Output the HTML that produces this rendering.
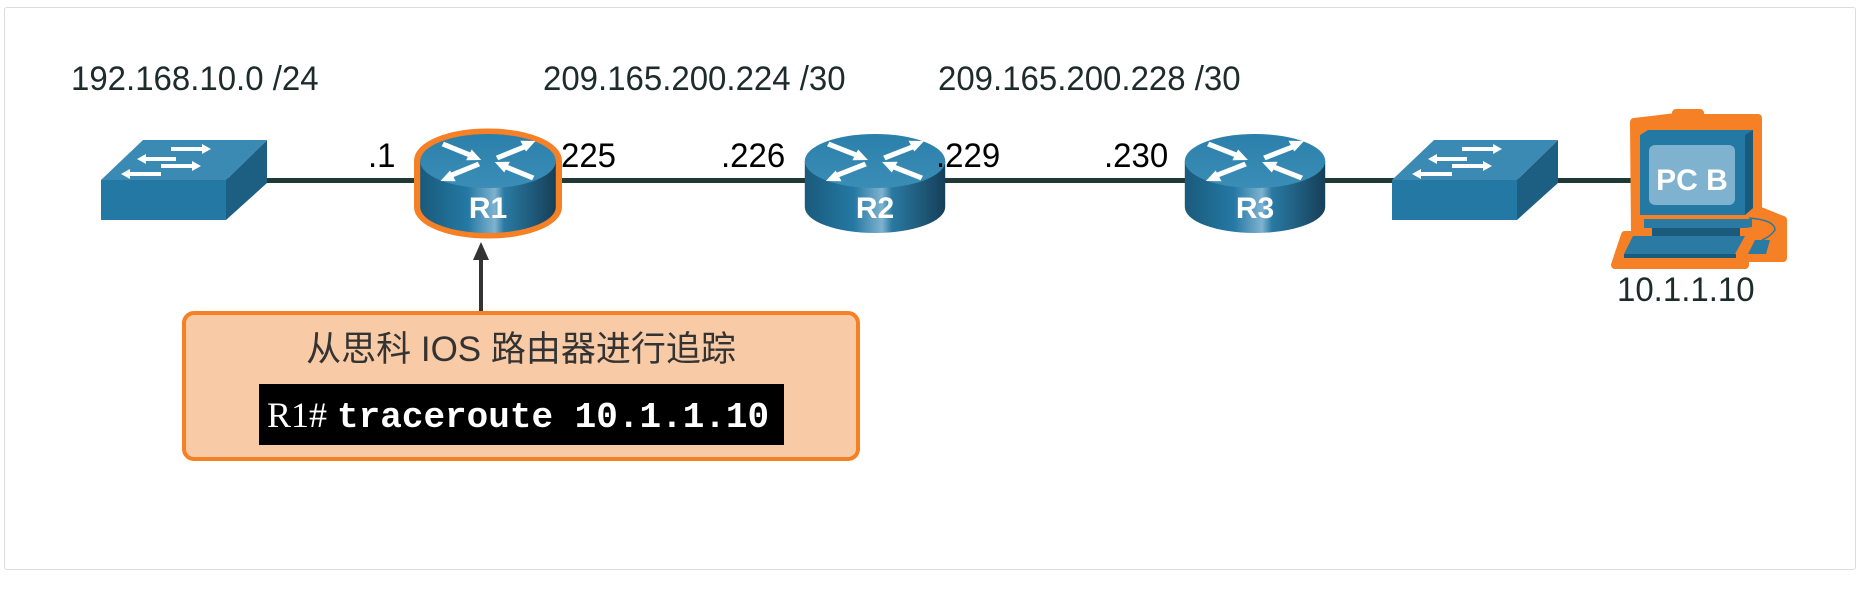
<!DOCTYPE html>
<html><head><meta charset="utf-8"><style>
body{margin:0;width:1862px;height:594px;background:#fff;overflow:hidden;position:relative;font-family:"Liberation Sans","Noto Sans CJK SC",sans-serif}
.card{position:absolute;left:4px;top:7px;width:1850px;height:561px;border:1px solid #dcdcdc;border-radius:3px}
.t{position:absolute;font-size:34px;color:#1d2b2b;white-space:nowrap;transform:scaleX(0.97);transform-origin:left;line-height:40px}
.box{position:absolute;left:182px;top:311px;width:670px;height:142px;background:#f9caa6;border:4px solid #f58025;border-radius:12px}
.title{position:absolute;left:0;width:100%;top:13px;text-align:center;font-size:35px;color:#333;line-height:44px}
.cmd{position:absolute;left:73px;top:69px;width:525px;height:61px;background:#000;color:#fff;font-size:36px;line-height:61px;white-space:nowrap;padding-left:8px;box-sizing:border-box}
</style></head><body>
<div class="card"></div>
<svg width="1862" height="594" style="position:absolute;left:0;top:0">
<defs>
<linearGradient id="body" x1="0" x2="1"><stop offset="0" stop-color="#1a5a7c"/><stop offset=".35" stop-color="#2479a4"/><stop offset=".55" stop-color="#7fb2cf"/><stop offset=".62" stop-color="#2a7aa3"/><stop offset="1" stop-color="#163f58"/></linearGradient>
<linearGradient id="top" x1="0" y1="0" x2="0" y2="1"><stop offset="0" stop-color="#2b80ab"/><stop offset="1" stop-color="#3a8db6"/></linearGradient>
<g id="rt">
<path d="M-60 0 V46 A60 26 0 0 0 60 46 V0 Z" fill="url(#body)"/>
<ellipse cx="0" cy="0" rx="60" ry="27" fill="url(#top)"/>
<g stroke="#fff" stroke-width="5" fill="none">
<path d="M-40 -17 L-15 -5.5"/><path d="M40 17 L15 5.5"/><path d="M8 -3 L32 -14"/><path d="M-8 3 L-32 14"/></g>
<g fill="#fff">
<path d="M-6 -1 L-19.4 -0.7 L-14.4 -11.5Z"/><path d="M6 1 L19.4 0.7 L14.4 11.5Z"/>
<path d="M42 -20 L33.6 -9.5 L28.6 -20.3Z"/><path d="M-42 20 L-33.6 9.5 L-28.6 20.3Z"/></g>
</g>
<g id="sw">
<path d="M125 40 L166 0 V43 L125 80Z" fill="#1d5f83"/>
<path d="M0 40 L42 0 H166 L125 40Z" fill="#3b8ab3"/>
<rect x="0" y="40" width="125" height="40" fill="#2479a4"/>
<g stroke="#fff" stroke-width="4"><path d="M70 9 H105"/><path d="M42 19 H75"/><path d="M60 26 H95"/><path d="M26 34 H60"/></g>
<g fill="#fff"><path d="M110 9 L101 4 V14Z"/><path d="M36 19 L45 14 V24Z"/><path d="M100 26 L91 21 V31Z"/><path d="M20 34 L29 29 V39Z"/></g>
</g>
</defs>
<rect x="225" y="178" width="1410" height="5" fill="#1f3a36"/>
<use href="#sw" x="101" y="140"/>
<use href="#sw" x="1392" y="140"/>
<path d="M-60 0 V46 A60 26 0 0 0 60 46 V0 A60 27 0 0 0 -60 0Z" transform="translate(488 161) scale(1.13 1)" fill="#f58025" stroke="#f58025" stroke-width="11" stroke-linejoin="round"/>
<use href="#rt" transform="translate(488 161) scale(1.13 1)"/>
<use href="#rt" transform="translate(875 161) scale(1.17 1)"/>
<use href="#rt" transform="translate(1255 161) scale(1.17 1)"/>
<g font-family="Liberation Sans" font-weight="bold" font-size="30" fill="#fff" text-anchor="middle">
<text x="488" y="218">R1</text><text x="875" y="218">R2</text><text x="1255" y="218">R3</text></g>
<!-- PC -->
<path d="M1634 122 L1676 117 V113 H1700 V118 H1758 V210 L1783 220 V258 H1745 V265 H1615 L1625 235 H1635 Z" fill="#f58025" stroke="#f58025" stroke-width="8" stroke-linejoin="round"/>
<path d="M1640 135 L1648 130 H1753 V208 L1745 215 H1640Z" fill="#2479a4"/>
<path d="M1745 135 L1753 130 V208 L1745 215Z" fill="#1a5a7c"/>
<rect x="1649" y="145" width="86" height="60" rx="6" fill="#7fb2cf"/>
<text x="1692" y="190" font-family="Liberation Sans" font-weight="bold" font-size="30" fill="#fff" text-anchor="middle">PC B</text>
<path d="M1644 219 H1752 V227 L1746 228 H1644Z" fill="#2a7aa3"/>
<rect x="1652" y="228" width="88" height="8" fill="#1a5a7c"/>
<path d="M1633 236 H1745 L1735 254 H1624Z" fill="#2a7aa3"/>
<rect x="1624" y="254" width="112" height="4" fill="#1a5a7c"/>
<path d="M1755 240 H1770 L1766 254 H1748Z" fill="#2a7aa3"/>
<path d="M1749 218 Q1775 220 1775 230 Q1770 237 1762 240" stroke="#2479a4" fill="none" stroke-width="1.5"/>
<!-- arrow -->
<rect x="479" y="255" width="4" height="56" fill="#333"/>
<path d="M481 242 L473 260 H489Z" fill="#333"/>
</svg>
<div class="t" style="left:71px;top:59px">192.168.10.0 /24</div>
<div class="t" style="left:543px;top:59px">209.165.200.224 /30</div>
<div class="t" style="left:938px;top:59px">209.165.200.228 /30</div>
<div class="t" style="left:368px;top:136px;color:#000">.1</div>
<div class="t" style="left:561px;top:136px;color:#000">225</div>
<div class="t" style="left:721px;top:136px;color:#000">.226</div>
<div class="t" style="left:936px;top:136px;color:#000">.229</div>
<div class="t" style="left:1104px;top:136px;color:#000">.230</div>
<div class="t" style="left:1617px;top:270px">10.1.1.10</div>
<div class="box">
<div class="title">从思科 IOS 路由器进行追踪</div>
<div class="cmd"><span style="font-family:'Liberation Serif',serif">R1#</span> <b style="font-family:'Liberation Mono',monospace">traceroute 10.1.1.10</b></div>
</div>
</body></html>
